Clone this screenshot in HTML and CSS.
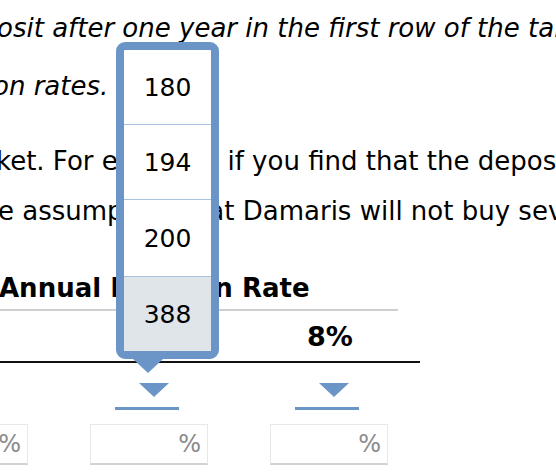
FILE: index.html
```html
<!DOCTYPE html>
<html>
<head>
<meta charset="utf-8">
<link rel="stylesheet" href="styles.css">
</head>
<body>
<div class="page">
  <div class="para para-1">
    <div class="line line-1"><em>osit after one year in the first row of the table</em></div>
    <div class="line line-2"><em>on rates.</em></div>
  </div>
  <div class="para para-2">
    <div class="line line-3">ket. For e<span class="hidden-part">xample, </span>if you find that the deposit</div>
    <div class="line line-4">e assumption that Damaris will not buy several</div>
  </div>
  <div class="table">
    <div class="head">Annual Inflation Rate</div>
    <div class="rate-row">
      <div class="col"></div>
      <div class="col"></div>
      <div class="col rate">8%</div>
    </div>
    <div class="select-row">
      <div class="col"></div>
      <div class="col"><div class="select"><span class="arrow"></span><span class="bar"></span></div></div>
      <div class="col"><div class="select"><span class="arrow"></span><span class="bar"></span></div></div>
    </div>
    <div class="input-row">
      <div class="col"><div class="box">%</div></div>
      <div class="col"><div class="box">%</div></div>
      <div class="col"><div class="box">%</div></div>
    </div>
  </div>
</div>
<div class="popup">
  <div class="list">
    <div class="item item-first">180</div>
    <div class="item">194</div>
    <div class="item item-tall">200</div>
    <div class="item item-active">388</div>
  </div>
  <span class="pointer"></span>
</div>
</body>
</html>
```

FILE: styles.css
```css
html, body {
  margin: 0;
  padding: 0;
  background: #fff;
  overflow: hidden;
}
body {
  width: 556px;
  height: 472px;
  position: relative;
  font-family: "DejaVu Sans", Verdana, sans-serif;
  color: #000;
}
.page {
  width: 556px;
}
.line {
  white-space: nowrap;
  font-size: 26px;
  line-height: 50px;
  height: 50px;
}
.line-1 { margin-top: 3px; text-indent: -3px; }
.line-2 { margin-top: 8px; text-indent: -7px; }
.para-2 { margin-top: 25px; }
.line-3 { text-indent: -4px; }
.hidden-part { letter-spacing: -0.4px; }
.line-4 { text-indent: -2px; }

.table {
  margin-top: 32px;
  width: 420px;
}
.head {
  font-weight: bold;
  font-size: 26px;
  line-height: 40px;
  height: 40px;
  white-space: nowrap;
  text-indent: -1px;
  width: 398px;
  border-bottom: 2px solid #cfcfcf;
  padding-bottom: 1px;
}
.rate-row, .select-row, .input-row {
  display: flex;
  margin-left: -123px;
}
.col {
  width: 180px;
  flex: 0 0 180px;
  display: flex;
  justify-content: center;
}
.rate-row {
  height: 50px;
  border-bottom: 2px solid #111;
  width: 543px;
}
.rate {
  font-weight: bold;
  font-size: 27px;
  line-height: 52px;
  padding-left: 6px;
  box-sizing: border-box;
}
.select-row {
  margin-top: 20px;
  height: 27px;
}
.select {
  width: 64px;
  display: flex;
  flex-direction: column;
  align-items: center;
}
.arrow {
  width: 0;
  height: 0;
  border-left: 15px solid transparent;
  border-right: 15px solid transparent;
  border-top: 14px solid #6a95c6;
  margin-left: 14px;
}
.bar {
  margin-top: 10px;
  width: 64px;
  height: 3px;
  background: #6a95c6;
}
.input-row {
  margin-top: 14px;
}
.box {
  width: 118px;
  height: 41px;
  box-sizing: border-box;
  border: 1px solid #e8e8e8;
  border-bottom: 2px solid #d2d2d2;
  color: #8a8a8a;
  font-size: 24px;
  line-height: 38px;
  text-align: right;
  padding-right: 6px;
  margin-left: 4px;
}

.popup {
  position: absolute;
  left: 116px;
  top: 42px;
  width: 103px;
  box-sizing: border-box;
  border: 8px solid #6a95c6;
  border-radius: 9px;
  background: #fff;
}
.list {
  display: flex;
  flex-direction: column;
}
.item {
  height: 74px;
  border-top: 1px solid #a9c3df;
  display: flex;
  align-items: center;
  justify-content: center;
  font-size: 25px;
  color: #000;
}
.item-first {
  border-top: none;
}
.item-tall {
  height: 76px;
}
.item-active {
  background: #dfe5e9;
}
.pointer {
  position: absolute;
  left: 9px;
  top: calc(100% + 8px);
  width: 0;
  height: 0;
  border-left: 15px solid transparent;
  border-right: 15px solid transparent;
  border-top: 14px solid #6a95c6;
}
```
